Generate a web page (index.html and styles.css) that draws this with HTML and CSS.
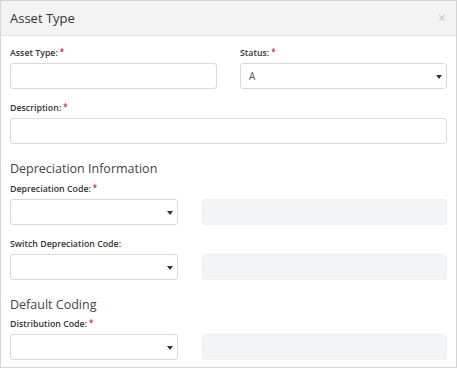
FILE: index.html
```html
<!DOCTYPE html>
<html>

<head>
   <title>Asset Type</title>
   <link rel="stylesheet" href="styles.css">
</head>

<body>
   <div class="modal">
      <div class="modal-header">
         <h1>Asset Type</h1>
         <span class="close">&times;</span>
      </div>

      <div class="modal-body">
         <div class="row two">
            <div class="field">
               <label>Asset Type:<span class="req">*</span></label>
               <div class="input"></div>
            </div>
            <div class="field">
               <label>Status:<span class="req">*</span></label>
               <div class="input select">A<span class="caret"></span></div>
            </div>
         </div>

         <div class="field">
            <label>Description:<span class="req">*</span></label>
            <div class="input"></div>
         </div>

         <h2>Depreciation Information</h2>
         <div class="field">
            <label>Depreciation Code:<span class="req">*</span></label>
            <div class="row code">
               <div class="input select"><span class="caret"></span></div>
               <div class="input readonly"></div>
            </div>
         </div>
         <div class="field">
            <label>Switch Depreciation Code:</label>
            <div class="row code">
               <div class="input select"><span class="caret"></span></div>
               <div class="input readonly"></div>
            </div>
         </div>

         <h2 class="second">Default Coding</h2>
         <div class="field">
            <label>Distribution Code:<span class="req">*</span></label>
            <div class="row code">
               <div class="input select"><span class="caret"></span></div>
               <div class="input readonly"></div>
            </div>
         </div>
      </div>
   </div>
</body>

</html>
```

FILE: styles.css
```css
body {
   margin: 0;
   font-family: 'Open Sans', 'Noto Sans', Arial, sans-serif;
   color: #333;
   background-color: #fff;
}

.modal {
   width: 457px;
   height: 368px;
   box-sizing: border-box;
   border: 1px solid #d4d4d4;
   overflow: hidden;
}

.modal-header {
   display: flex;
   justify-content: space-between;
   align-items: center;
   height: 34px;
   padding: 0 10px 0 9px;
   background-color: #f3f3f3;
   border-bottom: 1px solid #e2e2e2;
}

.modal-header h1 {
   margin: 0;
   font-size: 13px;
   font-weight: 400;
   color: #333;
}

.close {
   color: #c4c4c4;
   font-size: 14px;
   line-height: 14px;
}

.modal-body {
   padding: 11px 9px 0 9px;
}

.row {
   display: grid;
}

.row.two {
   grid-template-columns: 1fr 1fr;
   column-gap: 23px;
}

.row.code {
   grid-template-columns: 168px 1fr;
   column-gap: 24px;
}

.field {
   margin-bottom: 13px;
}

label {
   display: block;
   font-size: 8.8px;
   font-weight: 600;
   line-height: 12px;
   color: #333;
   margin-bottom: 4px;
}

.req {
   color: #c0272d;
   margin-left: 2px;
   font-size: 8px;
   position: relative;
   top: -1px;
}

.input {
   position: relative;
   height: 26px;
   box-sizing: border-box;
   border: 1px solid #d9d9d9;
   border-radius: 3px;
   background-color: #fff;
   font-size: 10px;
   line-height: 24px;
   padding-left: 8px;
   color: #555;
}

.input.readonly {
   background-color: #f3f4f5;
   border-color: #eeeff0;
}

.caret {
   position: absolute;
   right: 4px;
   top: 11px;
   width: 0;
   height: 0;
   border-left: 3px solid transparent;
   border-right: 3px solid transparent;
   border-top: 4px solid #333;
}

h2 {
   margin: 17px 0 6px 0;
   font-size: 12.5px;
   font-weight: 400;
   line-height: 16px;
   color: #444;
}

h2.second {
   margin-bottom: 5px;
}
```
